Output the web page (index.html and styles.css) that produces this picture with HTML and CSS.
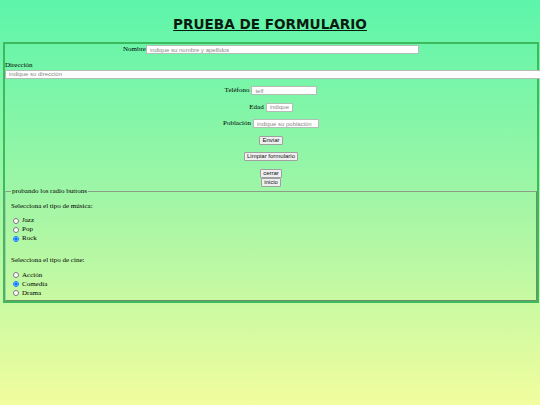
FILE: index.html
```html
<!DOCTYPE html>
<html lang="es">
<head>
<meta charset="utf-8">
<title>Prueba de formulario</title>
<link rel="stylesheet" href="styles.css">
</head>
<body>
<h1 class="title">PRUEBA DE FORMULARIO</h1>
<form class="form">
  <div class="row row-first"><label class="lbl" for="nombre">Nombre</label><input id="nombre" class="in in-nombre" type="text" placeholder="indique su nombre y apellidos"></div>
  <label class="lbl-block" for="dir">Dirección</label>
  <input id="dir" class="in in-dir" type="text" placeholder="indique su dirección">
  <div class="row row-gap"><label class="lbl" for="tel">Teléfono</label><input id="tel" class="in in-tel" type="text" placeholder="telf"></div>
  <div class="row row-gap"><label class="lbl" for="edad">Edad</label><input id="edad" class="in in-edad" type="text" placeholder="indique"></div>
  <div class="row row-gap"><label class="lbl" for="pob">Población</label><input id="pob" class="in in-pob" type="text" placeholder="indique su población"></div>
  <div class="row"><button class="btn" type="button">Enviar</button></div>
  <div class="row"><button class="btn" type="reset">Limpiar formulario</button></div>
  <div class="stack"><button class="btn" type="button">cerrar</button><button class="btn" type="button">inicio</button></div>
  <fieldset class="set">
    <legend class="legend">probando los radio buttons</legend>
    <p class="q">Selecciona el tipo de música:</p>
    <div class="radios">
      <label class="opt"><input class="radio" type="radio" name="musica" value="jazz">Jazz</label>
      <label class="opt"><input class="radio" type="radio" name="musica" value="pop">Pop</label>
      <label class="opt"><input class="radio" type="radio" name="musica" value="rock" checked>Rock</label>
    </div>
    <p class="q q-second">Selecciona el tipo de cine:</p>
    <div class="radios">
      <label class="opt"><input class="radio" type="radio" name="cine" value="accion">Acción</label>
      <label class="opt"><input class="radio" type="radio" name="cine" value="comedia" checked>Comedia</label>
      <label class="opt"><input class="radio" type="radio" name="cine" value="drama">Drama</label>
    </div>
  </fieldset>
</form>
</body>
</html>
```
FILE: styles.css
```css
html {
  height: 100%;
  background: linear-gradient(to bottom, #5cf5aa 0%, #a2f6a6 50%, #f2fd9e 100%);
}
body {
  margin: 0;
  min-height: 100%;
  overflow-x: hidden;
  font-family: "Liberation Serif", "Times New Roman", serif;
  font-size: 7px;
  color: #000;
}
.title {
  margin: 16px 0 9px;
  text-align: center;
  font-family: "DejaVu Sans", Verdana, sans-serif;
  font-weight: bold;
  font-size: 13.6px;
  line-height: 17px;
  color: #0b1a10;
  text-decoration: underline;
}
.form {
  margin: 0 1px 0 3px;
  border: 2px solid #3cba5c;
}
.row {
  display: flex;
  justify-content: center;
  align-items: center;
  height: 9px;
  margin-top: 7.5px;
}
.row-first {
  margin-top: 1px;
}
.row-gap {
  gap: 2px;
}
.lbl {
  line-height: 9px;
}
.in {
  box-sizing: border-box;
  height: 9px;
  margin: 0;
  padding: 0 3px;
  border: 1px solid #b3bdb5;
  border-radius: 0;
  background: #fff;
  font-family: "Liberation Sans", Arial, sans-serif;
  font-size: 6px;
  color: #333;
}
.in::placeholder {
  color: #8a8a8a;
}
.in-nombre { width: 273px; }
.in-tel { width: 66px; }
.in-edad { width: 27px; }
.in-pob { width: 66px; }
.lbl-block {
  display: block;
  margin-top: 6.5px;
  line-height: 9px;
}
.in-dir {
  display: block;
  width: calc(100% + 8px);
}
.btn {
  box-sizing: border-box;
  height: 9px;
  margin: 0;
  padding: 0 2px;
  border: 1px solid #a0a0a0;
  border-radius: 1px;
  background: #efefef;
  font-family: "Liberation Sans", Arial, sans-serif;
  font-size: 6px;
  line-height: 7px;
  color: #111;
}
.stack {
  display: flex;
  flex-direction: column;
  align-items: center;
  margin-top: 7.5px;
}
.set {
  margin: 0;
  padding: 0 6px 2.5px 5px;
  border: 1px solid;
  border-color: #8a9e8a #6e8e6e #6e8e6e #b0c8b0;
}
.legend {
  padding: 0 1px;
  line-height: 9px;
  font-size: 7px;
}
.q {
  margin: 6px 0 0;
  line-height: 9px;
}
.q-second {
  margin-top: 13px;
}
.radios {
  display: flex;
  flex-direction: column;
  margin-top: 5.5px;
}
.opt {
  display: flex;
  align-items: center;
  height: 9px;
  line-height: 9px;
}
.radio {
  width: 6px;
  height: 6px;
  margin: 0 3px 0 2px;
}
```
